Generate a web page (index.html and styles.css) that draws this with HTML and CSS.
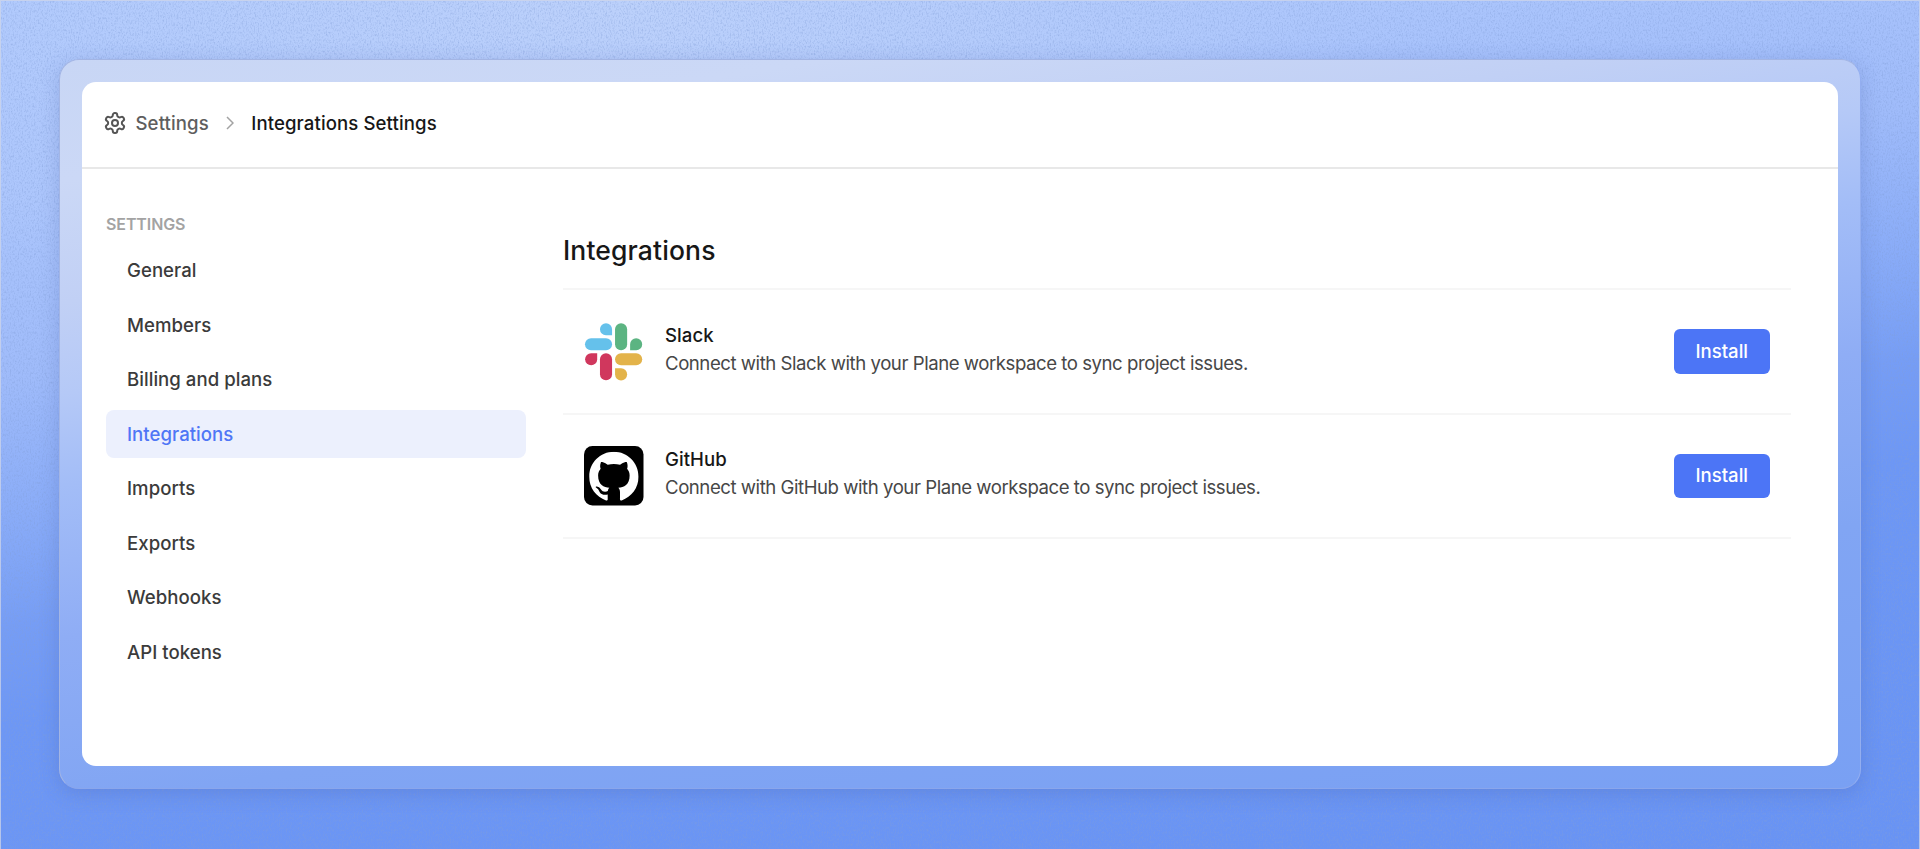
FILE: index.html
```html
<!DOCTYPE html>
<html lang="en">
<head>
<meta charset="utf-8">
<title>Integrations Settings</title>
<link rel="stylesheet" href="styles.css">
</head>
<body>
<svg class="grain" aria-hidden="true">
  <filter id="grain" x="0" y="0" width="100%" height="100%">
    <feTurbulence type="fractalNoise" baseFrequency="0.75 0.42" numOctaves="3" seed="4"/>
    <feColorMatrix values="0 0 0 0 0.22  0 0 0 0 0.34  0 0 0 0 0.68  1.1 0 0 0 -0.5"/>
  </filter>
  <rect width="100%" height="100%" filter="url(#grain)"/>
</svg>
<div class="frame">
  <div class="card">
    <header class="topbar">
      <svg class="gear" viewBox="0 0 24 24"><path d="M12.22 2h-.44a2 2 0 0 0-2 2v.18a2 2 0 0 1-1 1.73l-.43.25a2 2 0 0 1-2 0l-.15-.08a2 2 0 0 0-2.73.73l-.22.38a2 2 0 0 0 .73 2.73l.15.1a2 2 0 0 1 1 1.72v.51a2 2 0 0 1-1 1.74l-.15.09a2 2 0 0 0-.73 2.73l.22.38a2 2 0 0 0 2.73.73l.15-.08a2 2 0 0 1 2 0l.43.25a2 2 0 0 1 1 1.73V20a2 2 0 0 0 2 2h.44a2 2 0 0 0 2-2v-.18a2 2 0 0 1 1-1.73l.43-.25a2 2 0 0 1 2 0l.15.08a2 2 0 0 0 2.73-.73l.22-.39a2 2 0 0 0-.73-2.73l-.15-.08a2 2 0 0 1-1-1.74v-.5a2 2 0 0 1 1-1.74l.15-.09a2 2 0 0 0 .73-2.73l-.22-.38a2 2 0 0 0-2.73-.73l-.15.08a2 2 0 0 1-2 0l-.43-.25a2 2 0 0 1-1-1.73V4a2 2 0 0 0-2-2z"/><circle cx="12" cy="12" r="3"/></svg>
      <span class="crumb">Settings</span>
      <svg class="chevron" viewBox="0 0 8 14"><path d="M1 1l6 6-6 6"/></svg>
      <span class="crumb crumb-current">Integrations Settings</span>
    </header>
    <div class="body">
      <nav class="sidebar">
        <div class="sidebar-title">SETTINGS</div>
        <a class="item">General</a>
        <a class="item">Members</a>
        <a class="item">Billing and plans</a>
        <a class="item item-active">Integrations</a>
        <a class="item">Imports</a>
        <a class="item">Exports</a>
        <a class="item">Webhooks</a>
        <a class="item">API tokens</a>
      </nav>
      <main class="content">
        <h1 class="title">Integrations</h1>
        <section class="row">
          <svg class="logo" viewBox="0 0 60 60">
            <g fill="#65c1eb"><path d="M22.2 1.2a6.1 6.1 0 0 1 6.1 6.1v6.1h-6.1a6.1 6.1 0 0 1 0-12.2z"/><rect x="1" y="16.3" width="27.3" height="12.2" rx="6.1"/></g>
            <g fill="#5cb482"><rect x="31.3" y="1.2" width="12.2" height="27.3" rx="6.1"/><path d="M46.5 28.5v-6.1a6.1 6.1 0 1 1 6.1 6.1z"/></g>
            <g fill="#e3b34a"><rect x="31.3" y="31.5" width="27.4" height="12.2" rx="6.1"/><path d="M31.3 46.7h6.1a6.1 6.1 0 1 1-6.1 6.1z"/></g>
            <g fill="#d0375d"><path d="M13.3 31.5v6.1a6.1 6.1 0 1 1-6.1-6.1z"/><rect x="16.1" y="31.5" width="12.2" height="27.3" rx="6.1"/></g>
          </svg>
          <div class="info"><div class="name">Slack</div><div class="desc">Connect with Slack with your Plane workspace to sync project issues.</div></div>
          <button class="install">Install</button>
        </section>
        <section class="row">
          <svg class="logo" viewBox="0 0 60 60">
            <rect width="60" height="60" rx="8.5"/>
            <svg x="5.2" y="5.9" width="50" height="50" viewBox="0 0 98 98"><path fill="#fff" d="M48.854 0C21.839 0 0 22 0 49.217c0 21.756 13.993 40.172 33.405 46.69 2.427.49 3.316-1.059 3.316-2.362 0-1.141-.08-5.052-.08-9.127-13.59 2.934-16.42-5.867-16.42-5.867-2.184-5.704-5.42-7.17-5.42-7.17-4.448-3.015.324-3.015.324-3.015 4.934.326 7.523 5.052 7.523 5.052 4.367 7.496 11.404 5.378 14.235 4.074.404-3.178 1.699-5.378 3.074-6.6-10.839-1.141-22.243-5.378-22.243-24.283 0-5.378 1.94-9.778 5.014-13.2-.485-1.222-2.184-6.275.486-13.038 0 0 4.125-1.304 13.426 5.052a46.97 46.97 0 0 1 12.214-1.63c4.125 0 8.33.571 12.213 1.63 9.302-6.356 13.427-5.052 13.427-5.052 2.67 6.763.97 11.816.485 13.038 3.155 3.422 5.015 7.822 5.015 13.2 0 18.905-11.404 23.06-22.324 24.283 1.78 1.548 3.316 4.481 3.316 9.126 0 6.6-.08 11.897-.08 13.526 0 1.304.89 2.853 3.316 2.364 19.412-6.52 33.405-24.935 33.405-46.691C97.707 22 75.788 0 48.854 0z"/></svg>
          </svg>
          <div class="info"><div class="name">GitHub</div><div class="desc">Connect with GitHub with your Plane workspace to sync project issues.</div></div>
          <button class="install">Install</button>
        </section>
      </main>
    </div>
  </div>
</div>
</body>
</html>
```
FILE: styles.css
```css
* { box-sizing: border-box; }
body {
  margin: 0; width: 1920px; height: 849px; padding: 59px 59.5px 60px 59px; overflow: hidden; position: relative;
  font-family: Inter, "Liberation Sans", sans-serif; font-size: 18.6px; color: #3b3b3b;
  background:
    radial-gradient(ellipse 800px 380px at 620px 0, rgba(196,214,250,.65), rgba(196,214,250,0)),
    linear-gradient(172deg, #aec8fd 0%, #abc5fc 18%, #9fbbfa 34%, #8aacf8 46%, #769df5 56%, #6d97f5 65%, #6893f4 100%);
}
.grain {
  position: absolute; inset: 0; width: 1920px; height: 849px;
  border: solid rgba(205,212,232,.75); border-width: 1px 1.5px 0;
}
.frame {
  position: relative; height: 730px; padding: 22px 22px 23px 22px; border-radius: 20px;
  border: 1px solid; border-color: #a3b5e4 #93aef0 #8aa6ec #a3b5e4;
  background: linear-gradient(171deg, #c8d6f5 0%, #cbd8f6 12%, #c1d0f5 24%, #b5c9f7 33%, #a3bdf7 42%, #8fadf5 57%, #81a5f3 74%, #79a0f3 100%);
  box-shadow: 0 4px 20px rgba(60,85,165,.24);
}
.card { height: 684px; background: #fff; border-radius: 14px; overflow: hidden; }
.topbar { display: flex; align-items: center; height: 87px; padding: 0 0 3.5px 21px; border-bottom: 2px solid #e8e8e8; }
.gear { width: 24px; height: 24px; fill: none; stroke: #555; stroke-width: 2; }
.crumb { margin-left: 8.5px; color: #5e5e5e; font-weight: 500; letter-spacing: .1px; }
.crumb-current { color: #171717; margin-left: 17px; }
.chevron { width: 8px; height: 14px; margin-left: 17.5px; fill: none; stroke: #a3a3a3; stroke-width: 1.5; }
.body { display: flex; }
.sidebar { width: 420px; margin-left: 24px; padding-top: 44px; display: flex; flex-direction: column; gap: 5.9px; }
.sidebar-title { font-size: 16px; line-height: 22px; font-weight: 600; letter-spacing: -.1px; color: #a3a3a3; margin-bottom: 5.5px; }
.item { height: 48.6px; line-height: 48.2px; padding-left: 21px; border-radius: 8px; font-weight: 500; letter-spacing: .03px; }
.item-active { background: #ecf0fd; color: #4f76f6; }
.content { width: 1228px; margin-left: 37px; padding-top: 62px; }
.title { margin: 0; font-size: 26.5px; line-height: 38px; height: 59px; border-bottom: 2px solid #f6f6f6; font-weight: 500; letter-spacing: .13px; color: #171717; }
.row { display: flex; align-items: center; height: 124.5px; border-bottom: 2px solid #f6f6f6; padding: 0 21.5px 0 21px; }
.logo { width: 59.5px; height: 59.5px; }
.info { margin-left: 21.5px; padding-bottom: 3.4px; line-height: 27.6px; }
.name { font-weight: 500; letter-spacing: .05px; color: #171717; }
.desc { color: #474747; letter-spacing: -.0245em; }
.install { margin-left: auto; width: 95.5px; height: 44.5px; padding: 0 0 1px; border: 0; border-radius: 6px; background: #4c75f6; color: #fff; font: 500 18.6px Inter, sans-serif; }
```
